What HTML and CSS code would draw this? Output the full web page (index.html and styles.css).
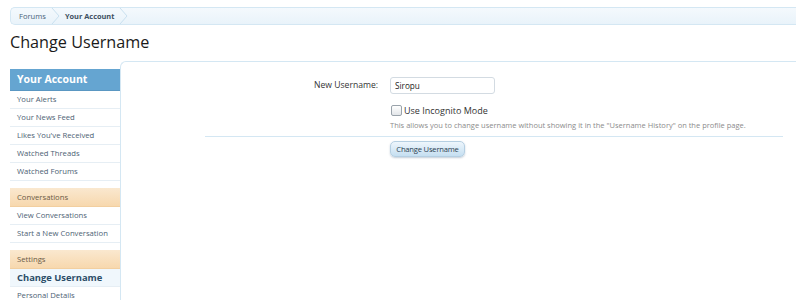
FILE: index.html
```html
<!DOCTYPE html>
<html>
<head>
<meta charset="utf-8">
<link rel="stylesheet" href="styles.css">
</head>
<body>
<div class="page">
  <nav class="crumbs">
    <span class="crumb">Forums</span>
    <svg class="arrow" width="9" height="16" viewBox="0 0 9 16"><polyline points="1,0 8,8 1,16" fill="none" stroke="#c9e0ef" stroke-width="1"/></svg>
    <span class="crumb current">Your Account</span>
    <svg class="arrow" width="9" height="16" viewBox="0 0 9 16"><polyline points="1,0 8,8 1,16" fill="none" stroke="#c9e0ef" stroke-width="1"/></svg>
  </nav>
  <h1 class="title">Change Username</h1>
  <div class="layout">
    <aside class="sidebar">
      <div class="side-head">Your Account</div>
      <ul class="side-list">
        <li>Your Alerts</li>
        <li>Your News Feed</li>
        <li>Likes You've Received</li>
        <li>Watched Threads</li>
        <li>Watched Forums</li>
      </ul>
      <div class="side-group">Conversations</div>
      <ul class="side-list">
        <li>View Conversations</li>
        <li>Start a New Conversation</li>
      </ul>
      <div class="side-group">Settings</div>
      <ul class="side-list last">
        <li class="selected">Change Username</li>
        <li>Personal Details</li>
      </ul>
    </aside>
    <main class="panel">
      <form class="xform">
        <div class="row">
          <label class="lbl">New Username:</label>
          <div class="ctrl"><input class="textbox" type="text" value="Siropu"></div>
        </div>
        <div class="row">
          <div class="lbl"></div>
          <div class="ctrl">
            <label class="check"><span class="box"></span>Use Incognito Mode</label>
            <p class="explain">This allows you to change username without showing it in the "Username History" on the profile page.</p>
          </div>
        </div>
        <div class="submit-row">
          <div class="lbl"></div>
          <div class="ctrl"><button type="button" class="button">Change Username</button></div>
        </div>
      </form>
    </main>
  </div>
</div>
</body>
</html>
```
FILE: styles.css
```css
html, body {
  margin: 0;
  padding: 0;
  background: #ffffff;
}
body {
  font-family: "Open Sans", "DejaVu Sans", sans-serif;
  font-size: 7.7px;
  color: #2b2b2b;
  overflow: hidden;
  height: 300px;
}
.page {
  padding-left: 10px;
  padding-top: 7px;
}
.crumbs {
  display: flex;
  align-items: center;
  height: 16px;
  border: 1px solid #d4e7f3;
  border-right: none;
  border-radius: 5px 0 0 5px;
  background: linear-gradient(#f4f9fd, #e9f3fa);
  padding-left: 7px;
}
.crumb {
  color: #4a6378;
  font-size: 7.6px;
  padding: 0 5px 0 1px;
}
.crumb.current {
  font-weight: bold;
  color: #3d4f5f;
  padding-left: 5px;
  font-size: 7.4px;
}
.arrow {
  display: block;
}
.title {
  margin: 7px 0 0 0;
  font-family: "Open Sans", sans-serif;
  font-weight: normal;
  font-size: 16.2px;
  line-height: 20px;
  color: #1a1a1a;
}
.layout {
  display: flex;
  margin-top: 9px;
}
.sidebar {
  width: 110px;
  flex: none;
  padding-top: 8px;
}
.side-head {
  height: 21px;
  line-height: 21px;
  background: #65a5d1;
  color: #ffffff;
  font-weight: bold;
  font-size: 10.5px;
  padding-left: 7px;
  border-bottom: 1px solid #5a97c2;
}
.side-list {
  list-style: none;
  margin: 0;
  padding: 0 0 7px 0;
}
.side-list li {
  height: 17px;
  line-height: 17px;
  border-bottom: 1px solid #e6eef4;
  padding-left: 7px;
  color: #4d6274;
  white-space: nowrap;
}
.side-list.last li:last-child {
  border-bottom: none;
}
.side-group {
  height: 18px;
  line-height: 18px;
  background: linear-gradient(#fae8cf, #f7d8ae);
  color: #6b5a46;
  padding-left: 7px;
  border-bottom: 1px solid #f2cfa0;
}
.side-list li.selected {
  background: #f0f7fc;
  color: #2b4d68;
  font-weight: bold;
  font-size: 9.4px;
  padding-left: 7px;
}
.panel {
  flex: 1;
  border: 1px solid #d4e7f3;
  border-right: none;
  border-bottom: none;
  border-radius: 6px 0 0 0;
  height: 260px;
  background: #ffffff;
}
.xform {
  margin-left: 84px;
  width: 578px;
  padding-top: 15px;
}
.row, .submit-row {
  display: flex;
}
.lbl {
  width: 185px;
  padding-right: 12px;
  text-align: right;
  box-sizing: border-box;
  flex: none;
  font-size: 8.6px;
  color: #333333;
  line-height: 17px;
}
.ctrl {
  flex: 1;
}
.textbox {
  width: 105px;
  height: 17px;
  box-sizing: border-box;
  border: 1px solid #d3dbe2;
  border-radius: 3px;
  padding: 0 4px;
  font-family: inherit;
  font-size: 8.2px;
  color: #222;
  margin: 0;
  display: block;
}
.row + .row {
  margin-top: 10px;
  border-bottom: 1px solid #d4e7f3;
  padding-bottom: 5px;
}
.check {
  display: flex;
  align-items: center;
  font-size: 9px;
  color: #333333;
  height: 12px;
}
.box {
  width: 9px;
  height: 9px;
  border: 1px solid #9aa3ab;
  border-radius: 2px;
  background: linear-gradient(#ffffff, #e3e6e9);
  margin: 0 2px 0 1px;
  flex: none;
}
.explain {
  margin: 3px 0 0 0;
  font-size: 7.5px;
  color: #8c8c8c;
  line-height: 12px;
}
.submit-row {
  margin-top: 4px;
}
.button {
  height: 16px;
  width: 75px;
  border: 1px solid #b5cfe2;
  border-radius: 5px;
  background: linear-gradient(#eef6fc, #c5dff1);
  box-shadow: 0 1px 2px rgba(80, 110, 140, 0.35);
  font-family: inherit;
  font-size: 7.6px;
  color: #2a3d4f;
  padding: 0;
  margin: 0;
  letter-spacing: -0.2px;
}
```
